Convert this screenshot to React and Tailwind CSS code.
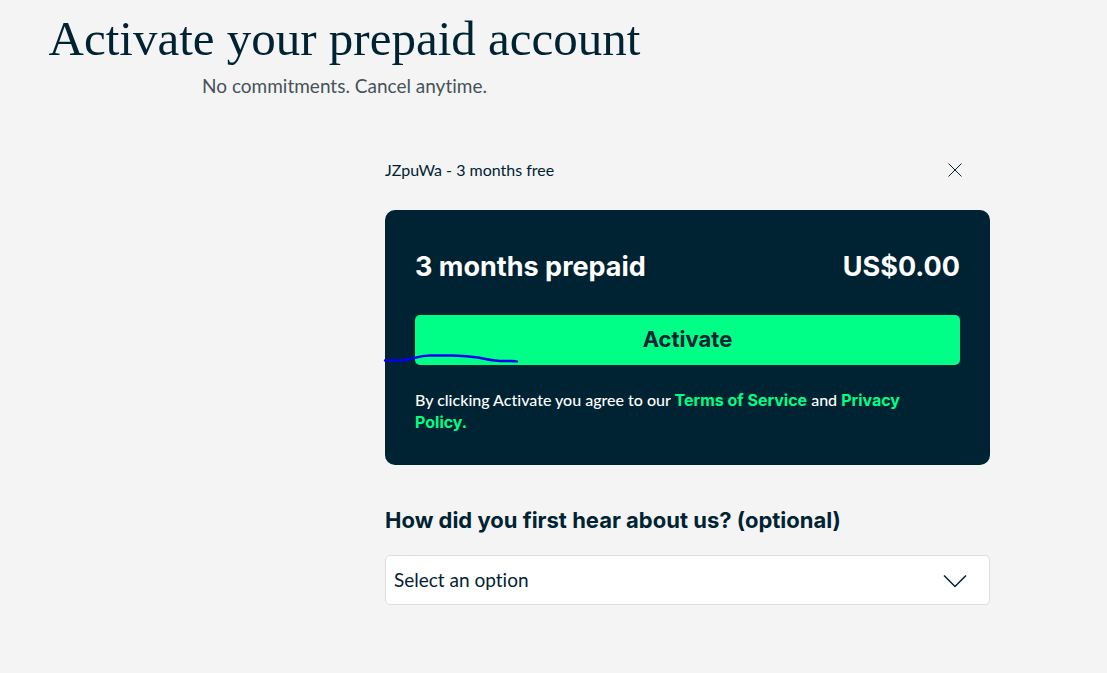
import { useState } from "react";

const PageHeader = () => {
  return (
    <header className="w-full max-w-[689px] px-6 pt-2 text-center">
      <h1 className="font-['Liberation_Serif',serif] text-[49px] leading-[62px] whitespace-nowrap">
        Activate your prepaid account
      </h1>
      <p className="pt-0.5 text-[19px] leading-7 text-[#46525a]">
        No commitments. Cancel anytime.
      </p>
    </header>
  );
};

const PlanCard = () => {
  return (
    <section className="relative rounded-[10px] bg-[#002333] px-[30px] pt-[33px] pb-8 text-white">
      <div className="flex items-center justify-between font-['Inter',sans-serif] text-[27px] leading-12 font-bold">
        <h2>3 months prepaid</h2>
        <p>US$0.00</p>
      </div>
      <button
        type="button"
        className="mt-6 h-[50px] w-full cursor-pointer rounded-[5px] bg-[#00ff87] pb-0.5 font-['Inter',sans-serif] text-[22px] font-bold text-[#002333]"
      >
        Activate
      </button>
      <p className="mt-6 pr-8 text-[16px] leading-[22px] font-medium">
        By clicking Activate you agree to our{" "}
        <a href="#terms" className="font-['Inter',sans-serif] font-bold text-[#00ff87]">
          Terms of Service
        </a>{" "}
        and{" "}
        <a href="#privacy" className="font-['Inter',sans-serif] font-bold text-[#00ff87]">
          Privacy Policy.
        </a>
      </p>
      {/* pen mark */}
      <svg
        className="pointer-events-none absolute top-36 -left-1"
        width="140"
        height="12"
        viewBox="0 0 140 12"
        fill="none"
        aria-hidden="true"
      >
        <path
          d="M4 6.5 H15 Q26 6.5 33 4 Q42 1.5 49 1.5 H72 Q86 2 97 3.5 Q110 6.5 119 7 H130 Q135 7 136 7.5"
          stroke="#0500f0"
          strokeWidth="2.4"
          strokeLinecap="round"
          strokeLinejoin="round"
        />
      </svg>
    </section>
  );
};

const SourceSelect = () => {
  const [source, setSource] = useState("");

  return (
    <div className="mt-[39px]">
      <label
        htmlFor="source"
        className="block font-['Inter',sans-serif] text-[22px] leading-8 font-bold"
      >
        How did you first hear about us? (optional)
      </label>
      <div className="relative mt-[19px]">
        <select
          id="source"
          value={source}
          onChange={(e) => setSource(e.target.value)}
          className="h-[50px] w-full appearance-none rounded-[5px] border border-[#dedede] bg-white px-2 text-[19px]"
        >
          <option value="">Select an option</option>
          <option value="friend">Friend or family</option>
          <option value="podcast">Podcast</option>
          <option value="social">Social media</option>
        </select>
        <svg
          className="pointer-events-none absolute top-5 right-[23px]"
          width="24"
          height="13"
          viewBox="0 0 24 13"
          fill="none"
          aria-hidden="true"
        >
          <path d="M1 0.5 L12 11.5 L23 0.5" stroke="#002333" strokeWidth="1.5" />
        </svg>
      </div>
    </div>
  );
};

const App = () => {
  const [showVoucher, setShowVoucher] = useState(true);

  return (
    <div className="min-h-screen bg-[#f4f4f4] font-['Lato',sans-serif] text-[#002333] [font-variant-ligatures:none]">
      <PageHeader />
      <main className="mt-[58px] mr-[117px] ml-[385px] pb-12">
        {showVoucher && (
          <div className="mb-7 flex items-center justify-between pr-7">
            <p className="text-[16px] leading-6">JZpuWa - 3 months free</p>
            <button
              type="button"
              aria-label="Remove voucher"
              className="cursor-pointer"
              onClick={() => setShowVoucher(false)}
            >
              <svg width="14" height="14" viewBox="0 0 14 14" fill="none">
                <path d="M0.5 0.5 L13.5 13.5 M13.5 0.5 L0.5 13.5" stroke="#002333" />
              </svg>
            </button>
          </div>
        )}
        <PlanCard />
        <SourceSelect />
      </main>
    </div>
  );
};

export default App;
